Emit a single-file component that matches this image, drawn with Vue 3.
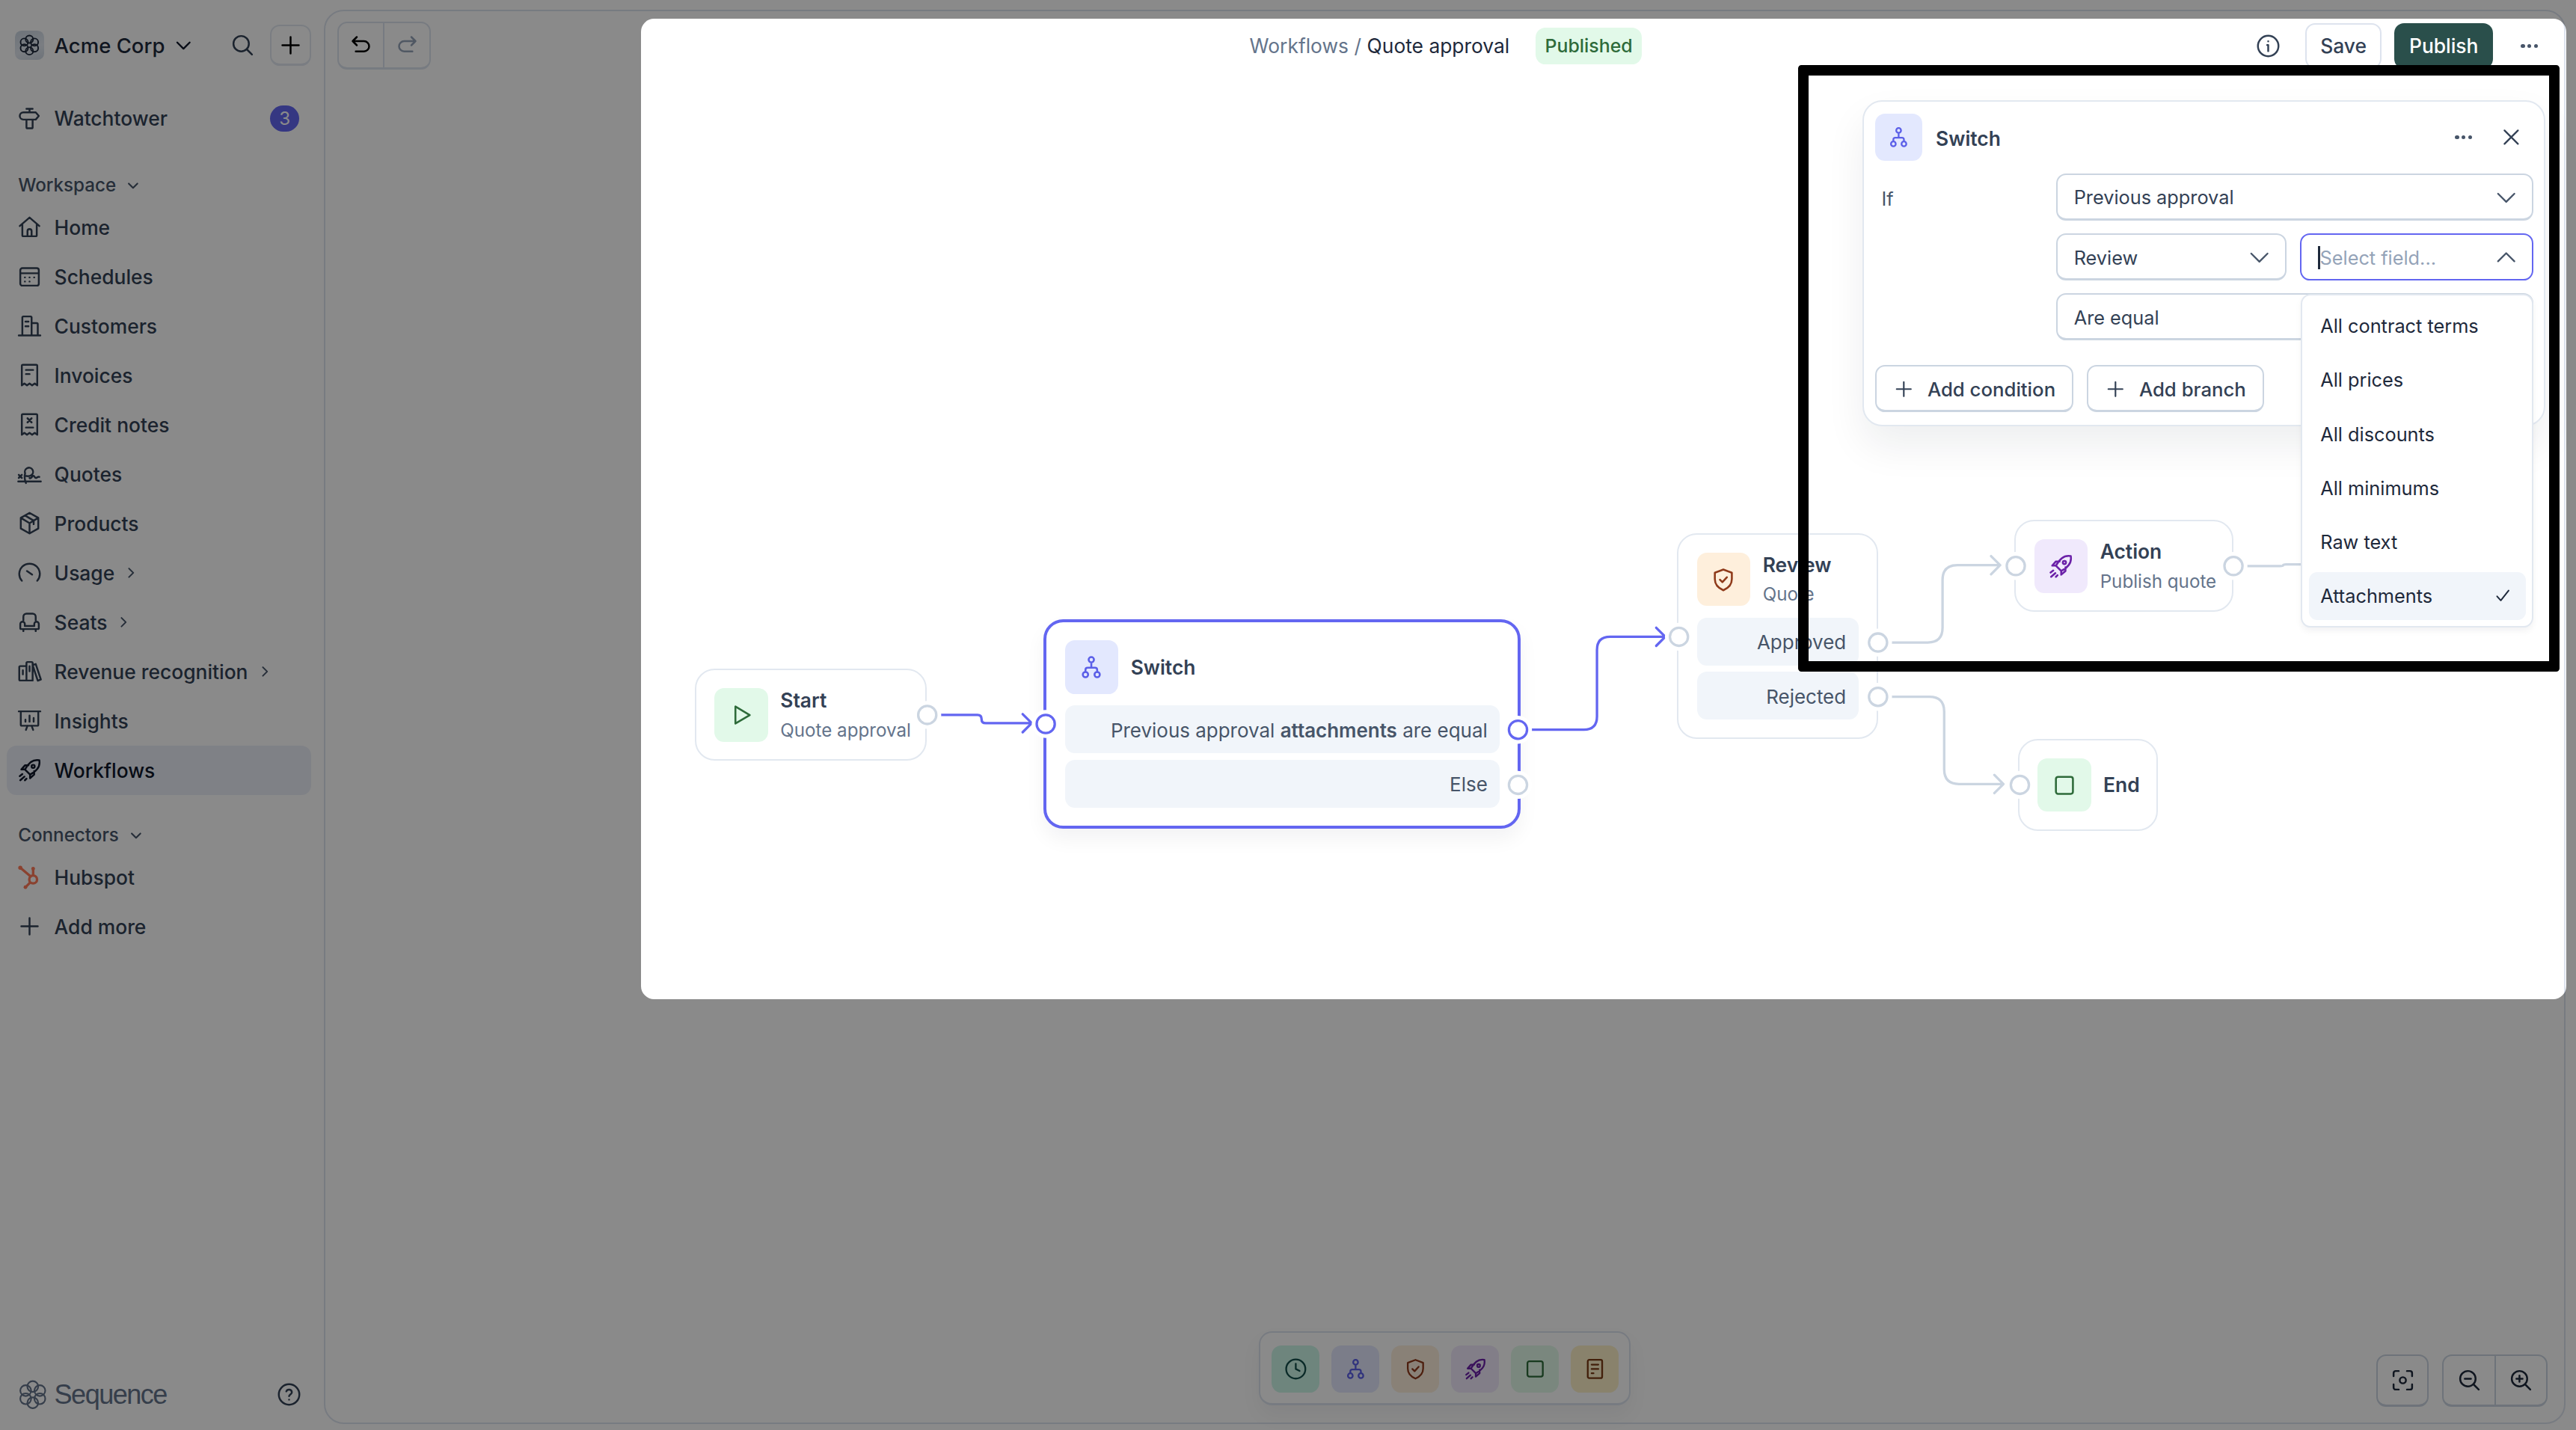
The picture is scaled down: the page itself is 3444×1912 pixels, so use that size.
<script setup>
const icons = {
  tower: 'M12 2.5v3.5M9 2.5h6M6 6h12l3 3.5-3 3.5H6a3.5 3.5 0 0 1 0-7zM9 13v7.5a1 1 0 0 0 1 1h4a1 1 0 0 0 1-1V13',
  home: 'M2.5 11 12 2.8l9.5 8.2M5 8.8V20a1 1 0 0 0 1 1h12a1 1 0 0 0 1-1V8.8M10 21v-5a2 2 0 0 1 4 0v5',
  calendar: 'M5 4h14a2 2 0 0 1 2 2v13a2 2 0 0 1-2 2H5a2 2 0 0 1-2-2V6a2 2 0 0 1 2-2zM3 9h18M7.5 13h.01M12 13h.01M16.5 13h.01M7.5 17h.01M12 17h.01',
  building: 'M1.5 21.5h21M5 21.5V4a1 1 0 0 1 1-1h7a1 1 0 0 1 1 1v17.5M14 9.5h5a1 1 0 0 1 1 1v11M8 8h3M8 12.5h3',
  receipt: 'M4.5 22V3a1 1 0 0 1 1-1h13a1 1 0 0 1 1 1v19l-2.5-1.8-2.5 1.8-2.5-1.8L9.5 22 7 20.2zM8.5 7h7M8.5 11h3.5',
  creditNote: 'M4.5 22V3a1 1 0 0 1 1-1h13a1 1 0 0 1 1 1v19l-2.5-1.8-2.5 1.8-2.5-1.8L9.5 22 7 20.2zM10 6l4 4M14 6l-4 4M8.5 15h7',
  signature: 'M1 19.5h22M1.5 13l3 3M4.5 13l-3 3M8.5 21c-1.2-3-1.8-6-.8-9.5a4 4 0 1 1 5.8 2c-1.6 1-3.5 1-5.5.5M12 16c1.5 1.5 2.5-2.5 4-2 1 .3 1 2.5 2.5 2s1.5-1.5 3-1',
  box: 'M12 2 20.5 6.8v10.4L12 22l-8.5-4.8V6.8zM3.5 6.8 12 12l8.5-5.2M12 12v10M7.5 4.5l8.5 5v3.5',
  gauge: 'M4.5 20a10 10 0 1 1 15 0M9.5 10.5l5 3.5',
  seat: 'M6 10.5V7a3 3 0 0 1 3-3h6a3 3 0 0 1 3 3v3.5M3 14a2.2 2.2 0 0 1 4.4 0v2h9.2v-2a2.2 2.2 0 0 1 4.4 0v4a1 1 0 0 1-1 1H4a1 1 0 0 1-1-1zM6 19v2M18 19v2',
  books: 'M3 7h5a1 1 0 0 1 1 1v13H3a1 1 0 0 1-1-1V8a1 1 0 0 1 1-1zM9 4a1 1 0 0 1 1-1h4a1 1 0 0 1 1 1v17H9zM15 6l3-1 5 15-3 1.2zM5.5 11v4M12 7v5',
  insights: 'M1.5 3h21M3.5 3v13a1 1 0 0 0 1 1h15a1 1 0 0 0 1-1V3M8 13v-2M12 13V7M16 13V9.5M10 17l-1.5 4M14 17l1.5 4',
  rocket: 'M13 4.5C15.5 2.5 18.5 2 21.5 2.5c.5 3 0 6-2 8.5-1.7 2.3-4 4-7 5.5l-5-5c1.5-2.8 3.2-5.2 5.5-7zM7.5 11.5H4l3.5-4H11M12.5 16.5V20l4-3.5V13M15.5 10a1.5 1.5 0 1 0 0-3 1.5 1.5 0 0 0 0 3zM5 16l-2.5 2M7 18.5 3 22M9 20.5l-1.5 1.5',
  plus: 'M12 4v16M4 12h16',
  chevronDown: 'M5 9l7 7 7-7',
  chevronUp: 'M5 15l7-7 7 7',
  chevronRight: 'M9 5l7 7-7 7',
  search: 'M10.5 18a7.5 7.5 0 1 0 0-15 7.5 7.5 0 0 0 0 15zM21 21l-5-5',
  undo: 'M8 4 4 8l4 4M4 8h11a5 5 0 0 1 0 10H7',
  redo: 'M16 4l4 4-4 4M20 8H9a5 5 0 0 0 0 10h8',
  info: 'M12 22a10 10 0 1 0 0-20 10 10 0 0 0 0 20zM12 11v6M11 11h1M12 7.5h.01',
  help: 'M12 22a10 10 0 1 0 0-20 10 10 0 0 0 0 20zM9.3 9a2.8 2.8 0 0 1 5.4.9c0 1.900-2.700 2.300-2.700 3.800M12 17h.01',
  close: 'M5 5l14 14M19 5 5 19',
  check: 'M5 13l4.5 5L19 6',
  play: 'M6.5 4v16l13.5-8z',
  stop: 'M6 4h12a2 2 0 0 1 2 2v12a2 2 0 0 1-2 2H6a2 2 0 0 1-2-2V6a2 2 0 0 1 2-2z',
  shield: 'M12 2.5l8 3v6c0 4.8-3.3 8.5-8 10.5-4.700-2-8-5.700-8-10.500v-6zM8.800 12l2.300 2.300 4.200-4.600',
  switch: 'M12 7.500a2.500 2.500 0 1 0 0-5 2.500 2.500 0 0 0 0 5zM12 7.500v5M6.500 16.500V14.500a2 2 0 0 1 2-2h7a2 2 0 0 1 2 2v2M6.500 21.500a2.500 2.500 0 1 0 0-5 2.500 2.500 0 0 0 0 5zM17.500 21.500a2.500 2.500 0 1 0 0-5 2.500 2.500 0 0 0 0 5z',
  clock: 'M12 22a10 10 0 1 0 0-20 10 10 0 0 0 0 20zM12 6.500V12l4 2',
  doc: 'M6 2.500h12a1.500 1.500 0 0 1 1.500 1.500v16a1.500 1.500 0 0 1-1.500 1.500H6A1.500 1.500 0 0 1 4.500 20V4A1.500 1.500 0 0 1 6 2.500zM8.500 7.500h7M8.500 12h7M8.500 16.500h2',
  fit: 'M3 8V5a2 2 0 0 1 2-2h3M16 3h3a2 2 0 0 1 2 2v3M21 16v3a2 2 0 0 1-2 2h-3M8 21H5a2 2 0 0 1-2-2v-3M12 15a3 3 0 1 0 0-6 3 3 0 0 0 0 6z',
  zoomOut: 'M10.500 18a7.500 7.500 0 1 0 0-15 7.500 7.500 0 0 0 0 15zM21 21l-5-5M7.500 10.500h6',
  zoomIn: 'M10.500 18a7.500 7.500 0 1 0 0-15 7.500 7.500 0 0 0 0 15zM21 21l-5-5M7.500 10.500h6M10.500 7.500v6',
}

const petals = [0, 60, 120, 180, 240, 300].map((deg) => ({
  cx: 12 + 6.6 * Math.sin((deg * Math.PI) / 180),
  cy: 12 - 6.6 * Math.cos((deg * Math.PI) / 180),
}))

const navItems = [
  { label: 'Home', icon: 'home' },
  { label: 'Schedules', icon: 'calendar' },
  { label: 'Customers', icon: 'building' },
  { label: 'Invoices', icon: 'receipt' },
  { label: 'Credit notes', icon: 'creditNote' },
  { label: 'Quotes', icon: 'signature' },
  { label: 'Products', icon: 'box' },
  { label: 'Usage', icon: 'gauge', more: true },
  { label: 'Seats', icon: 'seat', more: true },
  { label: 'Revenue recognition', icon: 'books', more: true },
  { label: 'Insights', icon: 'insights' },
  { label: 'Workflows', icon: 'rocket', active: true },
]

const palette = [
  { icon: 'clock', tone: 'teal' },
  { icon: 'switch', tone: 'indigo' },
  { icon: 'shield', tone: 'orange' },
  { icon: 'rocket', tone: 'purple' },
  { icon: 'stop', tone: 'green' },
  { icon: 'doc', tone: 'yellow' },
]

const nodes = [
  { id: 'start', x: 422.3, y: 406.5, w: 141, h: 56, title: 'Start', sub: 'Quote approval', icon: 'play', tone: 'green' },
  {
    id: 'switch', x: 634.3, y: 376.5, w: 290, h: 127, title: 'Switch', icon: 'switch', tone: 'indigo', selected: true,
    rows: [{ text: 'Previous approval', bold: 'attachments', tail: 'are equal' }, { text: 'Else' }],
  },
  {
    id: 'review', x: 1019.3, y: 324, w: 122, h: 125, title: 'Review', sub: 'Quote', icon: 'shield', tone: 'orange',
    rows: [{ text: 'Approved' }, { text: 'Rejected' }],
  },
  { id: 'action', x: 1224.3, y: 316, w: 133, h: 56, title: 'Action', sub: 'Publish quote', icon: 'rocket', tone: 'purple' },
  { id: 'end', x: 1226.3, y: 449, w: 85, h: 56, title: 'End', icon: 'stop', tone: 'green' },
]

const edges = [
  { d: 'M570 434.5H594q2.5 0 2.5 2.5t2.5 2.5H627M621.5 434l5.5 5.5-5.5 5.5', active: true },
  { d: 'M929.5 443.5H962.5q8 0 8-8V395q0-8 8-8H1012M1006.5 381.5l5.5 5.5-5.5 5.5', active: true },
  { d: 'M1149.5 390.5H1171.5q9 0 9-9V352.5q0-9 9-9H1215.5M1210 338l5.5 5.5-5.5 5.5' },
  { d: 'M1149.5 423.5H1172.5q9 0 9 9V467.5q0 9 9 9H1217.5M1212 471l5.5 5.5-5.5 5.5' },
  { d: 'M1364.5 344H1385.5q2 0 2-.5t2-.5H1410' },
]

const ports = [
  { x: 563.5, y: 434.5 },
  { x: 635.5, y: 440, active: true },
  { x: 922.5, y: 443.5, active: true },
  { x: 922.5, y: 477 },
  { x: 1020.3, y: 387 },
  { x: 1141.3, y: 390.5 },
  { x: 1141.3, y: 423.5 },
  { x: 1225, y: 344 },
  { x: 1357.3, y: 344 },
  { x: 1227.5, y: 477 },
]

const fields = ['All contract terms', 'All prices', 'All discounts', 'All minimums', 'Raw text', 'Attachments']
</script>

<template>
  <div class="app">
    <aside class="sidebar">
      <div class="org">
        <span class="org-logo">
          <svg class="logo-mark" viewBox="0 0 24 24"><circle v-for="(p, i) in petals" :key="i" :cx="p.cx" :cy="p.cy" r="4.2" /></svg>
        </span>
        <span class="org-name">Acme Corp</span>
        <svg class="icon org-chevron" viewBox="0 0 24 24"><path :d="icons.chevronDown" /></svg>
        <svg class="icon org-search" viewBox="0 0 24 24"><path :d="icons.search" /></svg>
        <button class="org-add"><svg class="icon" viewBox="0 0 24 24"><path :d="icons.plus" /></svg></button>
      </div>

      <div class="nav-row">
        <svg class="icon" viewBox="0 0 24 24"><path :d="icons.tower" /></svg>
        <span>Watchtower</span>
        <span class="count">3</span>
      </div>

      <div class="section">Workspace <svg class="icon mini" viewBox="0 0 24 24"><path :d="icons.chevronDown" /></svg></div>
      <div v-for="item in navItems" :key="item.label" class="nav-row" :class="{ active: item.active }">
        <svg class="icon" viewBox="0 0 24 24"><path :d="icons[item.icon]" /></svg>
        <span>{{ item.label }}</span>
        <svg v-if="item.more" class="icon mini more" viewBox="0 0 24 24"><path :d="icons.chevronRight" /></svg>
      </div>

      <div class="section second">Connectors <svg class="icon mini" viewBox="0 0 24 24"><path :d="icons.chevronDown" /></svg></div>
      <div class="nav-row">
        <svg class="icon hubspot" viewBox="0 0 24 24">
          <circle cx="15.5" cy="14.5" r="3.8" />
          <path d="M15.5 10.5V5M3.5 3.500l9.500 8M12.500 17.500 8.500 21.500" />
          <circle class="dot" cx="15.5" cy="4" r="1.8" />
          <circle class="dot" cx="3" cy="3" r="2" />
          <circle class="dot" cx="8" cy="22" r="1.8" />
        </svg>
        <span>Hubspot</span>
      </div>
      <div class="nav-row">
        <svg class="icon" viewBox="0 0 24 24"><path :d="icons.plus" /></svg>
        <span>Add more</span>
      </div>

      <div class="brand">
        <svg class="brand-mark" viewBox="0 0 24 24"><circle v-for="(p, i) in petals" :key="i" :cx="p.cx" :cy="p.cy" r="4.4" /></svg>
        <span class="brand-name">Sequence</span>
        <svg class="icon brand-help" viewBox="0 0 24 24"><path :d="icons.help" /></svg>
      </div>
    </aside>

    <main class="panel">
      <header class="toolbar">
        <div class="history">
          <button><svg class="icon" viewBox="0 0 24 24"><path :d="icons.undo" /></svg></button>
          <button class="off"><svg class="icon" viewBox="0 0 24 24"><path :d="icons.redo" /></svg></button>
        </div>
        <div class="crumbs">
          <span class="crumb-muted">Workflows /</span>
          <span class="crumb-current">Quote approval</span>
          <span class="published">Published</span>
        </div>
        <div class="actions">
          <svg class="icon info" viewBox="0 0 24 24"><path :d="icons.info" /></svg>
          <button class="btn-save">Save</button>
          <button class="btn-publish">Publish</button>
          <span class="dots"><i></i><i></i><i></i></span>
        </div>
      </header>

      <div class="bottom-bar">
        <div class="palette">
          <span v-for="p in palette" :key="p.tone" class="tile" :class="p.tone">
            <svg class="icon" viewBox="0 0 24 24"><path :d="icons[p.icon]" /></svg>
          </span>
        </div>
        <div class="zoom-tools">
          <button class="zoom-btn"><svg class="icon" viewBox="0 0 24 24"><path :d="icons.fit" /></svg></button>
          <div class="zoom-group">
            <button class="zoom-btn"><svg class="icon" viewBox="0 0 24 24"><path :d="icons.zoomOut" /></svg></button>
            <button class="zoom-btn"><svg class="icon" viewBox="0 0 24 24"><path :d="icons.zoomIn" /></svg></button>
          </div>
        </div>
      </div>
    </main>

    <div class="canvas">
      <div
        v-for="n in nodes"
        :key="n.id"
        class="node"
        :class="{ selected: n.selected }"
        :style="{ left: `${n.x}px`, top: `${n.y}px`, width: `${n.w}px`, height: `${n.h}px` }"
      >
        <div class="node-head">
          <span class="tile" :class="n.tone"><svg class="icon" viewBox="0 0 24 24"><path :d="icons[n.icon]" /></svg></span>
          <div class="node-text">
            <div class="node-title">{{ n.title }}</div>
            <div v-if="n.sub" class="node-sub">{{ n.sub }}</div>
          </div>
        </div>
        <div v-for="r in n.rows" :key="r.text" class="node-row">
          <span>{{ r.text }} <b v-if="r.bold">{{ r.bold }}</b> {{ r.tail }}</span>
        </div>
      </div>

      <svg class="wires" viewBox="0 0 1565.45 869">
        <path v-for="(e, i) in edges" :key="i" class="wire" :class="{ on: e.active }" :d="e.d" />
        <g v-for="(p, i) in ports" :key="i">
          <circle class="halo" :cx="p.x" :cy="p.y" r="8.5" />
          <circle class="port" :class="{ on: p.active }" :cx="p.x" :cy="p.y" r="5.5" />
        </g>
      </svg>

      <section class="config">
        <div class="config-head">
          <span class="tile indigo"><svg class="icon" viewBox="0 0 24 24"><path :d="icons.switch" /></svg></span>
          <span class="config-title">Switch</span>
          <span class="dots"><i></i><i></i><i></i></span>
          <svg class="icon config-close" viewBox="0 0 24 24"><path :d="icons.close" /></svg>
        </div>
        <div class="config-form">
          <label class="if-label">If</label>
          <div class="select wide"><span>Previous approval</span><svg class="icon" viewBox="0 0 24 24"><path :d="icons.chevronDown" /></svg></div>
          <div class="select start"><span>Review</span><svg class="icon" viewBox="0 0 24 24"><path :d="icons.chevronDown" /></svg></div>
          <div class="select focused"><i class="caret"></i><span class="placeholder">Select field...</span><svg class="icon" viewBox="0 0 24 24"><path :d="icons.chevronUp" /></svg></div>
          <div class="select wide"><span>Are equal</span></div>
        </div>
        <div class="config-actions">
          <button class="btn-add"><svg class="icon" viewBox="0 0 24 24"><path :d="icons.plus" /></svg>Add condition</button>
          <button class="btn-add"><svg class="icon" viewBox="0 0 24 24"><path :d="icons.plus" /></svg>Add branch</button>
        </div>
      </section>

      <ul class="menu">
        <li v-for="f in fields" :key="f" :class="{ picked: f === 'Attachments' }">
          {{ f }}
          <svg v-if="f === 'Attachments'" class="icon" viewBox="0 0 24 24"><path :d="icons.check" /></svg>
        </li>
      </ul>
    </div>

    <div class="spotlight"></div>
    <div class="frame"></div>
  </div>
</template>

<style scoped>
.app {
  zoom: 2.2;
  position: relative;
  display: flex;
  width: 1565.45px;
  height: 869px;
  overflow: hidden;
  background: #fff;
  color: #334155;
  font-family: Inter, "Noto Sans", sans-serif;
  font-size: 12px;
}

button {
  font-family: inherit;
  padding: 0;
  background: #fff;
  cursor: pointer;
}

.icon {
  display: block;
  flex: none;
  width: 15px;
  height: 15px;
  fill: none;
  stroke: currentColor;
  stroke-width: 1.8;
  stroke-linecap: round;
  stroke-linejoin: round;
}

.icon.mini {
  width: 9px;
  height: 9px;
  stroke-width: 2.6;
}

.sidebar {
  display: flex;
  flex: none;
  flex-direction: column;
  width: 197px;
  height: 100%;
}

.org {
  display: flex;
  align-items: center;
  height: 57px;
  padding: 0 8px 2px 9px;
  box-sizing: border-box;
}

.org-logo {
  display: flex;
  align-items: center;
  justify-content: center;
  width: 18px;
  height: 18px;
  margin-right: 6px;
  border-radius: 4px;
  background: linear-gradient(160deg, #cbd5e1, #e2e8f0 60%, #cbd5e1);
}

.logo-mark {
  width: 13px;
  height: 13px;
  fill: none;
  stroke: #1e293b;
  stroke-width: 1.6;
}

.org-name {
  font-size: 12.5px;
  font-weight: 500;
  color: #1e293b;
}

.org-chevron {
  width: 13px;
  height: 13px;
  margin-left: 5px;
  color: #0f172a;
  stroke-width: 2;
}

.org-search {
  margin-left: auto;
  margin-right: 9px;
}

.org-add {
  display: flex;
  align-items: center;
  justify-content: center;
  width: 25px;
  height: 25px;
  border: 1px solid #e2e8f0;
  border-bottom-width: 1.5px;
  border-radius: 6px;
}

.nav-row {
  display: flex;
  flex: none;
  align-items: center;
  gap: 7.5px;
  width: 185px;
  height: 30px;
  margin-left: 4px;
  padding-left: 6.5px;
  box-sizing: border-box;
  border-radius: 6px;
  font-size: 12px;
  font-weight: 500;
}

.nav-row .mini {
  stroke-width: 2.4;
  color: #475569;
}

.nav-row .more {
  margin-left: -2px;
}

.nav-row.active {
  background: #ebeff7;
  color: #0f172a;
}

.count {
  display: flex;
  align-items: center;
  justify-content: center;
  width: 18px;
  height: 16px;
  margin-left: auto;
  margin-right: 7px;
  border-radius: 8px;
  background: #6366f1;
  color: #fff;
  font-size: 11px;
  font-weight: 400;
}

.section {
  display: flex;
  flex: none;
  align-items: center;
  gap: 6px;
  height: 21px;
  margin-top: 15px;
  padding-left: 11px;
  color: #475569;
  font-size: 11px;
  font-weight: 500;
}

.section.second {
  margin-top: 14px;
}

.hubspot {
  color: #ff7a59;
}

.hubspot.icon {
  stroke-width: 2.4;
}

.hubspot .dot {
  fill: #ff7a59;
  stroke: none;
}

.brand {
  display: flex;
  align-items: center;
  height: 24px;
  margin-top: auto;
  margin-bottom: 9.5px;
  padding-left: 11px;
  color: #64748b;
}

.brand-mark {
  width: 18px;
  height: 18px;
  margin-right: 4px;
  fill: none;
  stroke: currentColor;
  stroke-width: 1.3;
}

.brand-name {
  font-family: "Liberation Sans", Arial, sans-serif;
  font-size: 16.4px;
  letter-spacing: -0.7px;
}

.brand-help {
  margin-left: auto;
  margin-right: 14px;
  color: #334155;
}

.panel {
  position: relative;
  flex: 1;
  min-width: 0;
  margin: 6px 6.45px 3.5px 0;
  border: 1px solid #dde3ee;
  border-radius: 12px;
}

.toolbar {
  display: grid;
  grid-template-columns: 1fr auto 1fr;
  align-items: center;
  height: 42px;
  padding: 0 13px 0 7px;
}

.history {
  display: flex;
  width: 57px;
  height: 29px;
  border: 1px solid #dde3ee;
  border-bottom-width: 1.5px;
  border-radius: 6px;
  box-sizing: border-box;
}

.history button {
  flex: 1;
  display: flex;
  align-items: center;
  justify-content: center;
  border: 0;
  background: none;
}

.history button + button {
  border-left: 1px solid #dde3ee;
}

.history .off {
  color: #94a3b8;
}

.crumbs {
  display: flex;
  align-items: center;
  gap: 3.5px;
  margin-left: 7px;
  font-size: 12px;
}

.crumb-muted {
  color: #64748b;
}

.crumb-current {
  color: #1e293b;
}

.published {
  margin-left: 12.5px;
  padding: 0 5.5px;
  height: 22px;
  line-height: 22px;
  border-radius: 6px;
  background: #e2f9e9;
  color: #2e6b3a;
  font-size: 11.3px;
  font-weight: 500;
}

.actions {
  display: flex;
  align-items: center;
  justify-content: flex-end;
}

.info {
  margin-right: 15px;
}

.btn-save,
.btn-publish {
  height: 28px;
  border-radius: 6px;
  font-size: 12px;
  font-weight: 500;
}

.btn-save {
  width: 46px;
  margin-right: 8px;
  border: 1px solid #dde3ee;
  color: #334155;
}

.btn-publish {
  width: 60px;
  margin-right: 14px;
  border: 0;
  background: #2a4f4b;
  color: #fff;
}

.dots {
  display: flex;
  gap: 1.5px;
  width: 16px;
  justify-content: center;
}

.dots i {
  width: 2.5px;
  height: 2.5px;
  border-radius: 50%;
  background: #475569;
}

.bottom-bar {
  position: absolute;
  left: 0;
  right: 0;
  bottom: 10.5px;
  height: 45px;
}

.palette {
  position: absolute;
  left: 567px;
  bottom: 0;
  display: flex;
  gap: 7.4px;
  width: 226px;
  height: 45px;
  padding: 7.5px 7px;
  box-sizing: border-box;
  border: 1px solid #dde3ee;
  border-bottom-width: 1.5px;
  border-radius: 8px;
  box-shadow: 0 6px 12px rgba(15, 23, 42, 0.05);
}

.zoom-tools {
  position: absolute;
  right: 10px;
  bottom: -1px;
  display: flex;
  gap: 8px;
}

.zoom-group {
  display: flex;
}

.zoom-btn {
  display: flex;
  align-items: center;
  justify-content: center;
  width: 32px;
  height: 32px;
  border: 1px solid #cbd5e1;
  border-bottom-width: 1.5px;
  border-radius: 6px;
  background: none;
  color: #1e293b;
}

.zoom-group .zoom-btn:first-child {
  border-right: 0;
  border-radius: 6px 0 0 6px;
}

.zoom-group .zoom-btn:last-child {
  border-radius: 0 6px 6px 0;
}

.tile {
  display: flex;
  flex: none;
  align-items: center;
  justify-content: center;
  width: 29px;
  height: 29px;
  border-radius: 6px;
}

.tile .icon {
  width: 14px;
  height: 14px;
  stroke-width: 1.8;
}

.tile.green { background: #e2f9e9; color: #2e6b3a; }
.tile.indigo { background: #e3e8fe; color: #5b5fe8; }
.tile.orange { background: #feefdc; color: #8f3a1a; }
.tile.purple { background: #f0e9fc; color: #6b21a8; }
.tile.teal { background: #ccf5e8; color: #134e4a; }
.tile.yellow { background: #fdf0c8; color: #7a3a14; }

.canvas {
  position: absolute;
  inset: 0;
  pointer-events: none;
}

.node {
  position: absolute;
  padding: 11px;
  box-sizing: border-box;
  border: 1px solid #e2e8f0;
  border-radius: 12px;
  background: #fff;
}

.node.selected {
  padding: 11px 11px;
  border: 2px solid #6366f1;
  box-shadow: 0 6px 12px rgba(15, 23, 42, 0.05);
}

.node-head {
  display: flex;
  align-items: center;
  gap: 7.5px;
  height: 32.5px;
  margin-bottom: 7px;
}

.node .tile {
  width: 32.5px;
  height: 32.5px;
}

.node .tile .icon {
  width: 15.5px;
  height: 15.5px;
}

.node-text {
  padding-top: 0.5px;
}

.node-title {
  font-size: 12px;
  font-weight: 600;
  line-height: 18px;
}

.node-sub {
  color: #64748b;
  font-size: 11px;
  line-height: 18px;
  white-space: nowrap;
}

.node-row {
  display: flex;
  align-items: center;
  justify-content: flex-end;
  height: 29px;
  margin-bottom: 4px;
  padding: 1px 7.5px 0 0;
  box-sizing: border-box;
  border-radius: 6px;
  background: #f1f5fa;
  color: #475569;
  font-size: 11.8px;
  white-space: nowrap;
}

.node-row b {
  font-weight: 600;
}

.wires {
  position: absolute;
  left: 0;
  top: 0;
  width: 1565.45px;
  height: 869px;
}

.wire {
  fill: none;
  stroke: #cbd5e1;
  stroke-width: 1.5;
  stroke-linecap: round;
  stroke-linejoin: round;
}

.wire.on {
  stroke: #6366f1;
}

.halo {
  fill: #fff;
}

.port {
  fill: #fff;
  stroke: #cbd5e1;
  stroke-width: 1.5;
}

.port.on {
  stroke: #6366f1;
}

.config {
  position: absolute;
  left: 1132px;
  top: 61px;
  width: 415px;
  height: 198px;
  padding: 7px 6.5px;
  box-sizing: border-box;
  border: 1px solid #e2e8f0;
  border-radius: 12px;
  background: #fff;
  box-shadow: 0 12px 24px rgba(15, 23, 42, 0.07);
}

.config-head {
  display: flex;
  align-items: center;
  height: 29px;
  margin-bottom: 7.5px;
}

.config-title {
  margin-left: 8px;
  padding-top: 1px;
  font-size: 12px;
  font-weight: 600;
}

.config-head .dots {
  margin-left: auto;
  margin-right: 13.8px;
}

.config-close {
  width: 14px;
  height: 14px;
  margin-right: 6.7px;
}

.config-form {
  display: grid;
  grid-template-columns: 101.5px 140px 1fr;
  column-gap: 8.5px;
  row-gap: 8px;
}

.if-label {
  padding: 6.5px 0 0 4px;
  color: #475569;
  font-size: 11.5px;
  line-height: 18px;
}

.select {
  display: flex;
  align-items: center;
  height: 28.5px;
  padding: 1px 7px 0 10px;
  box-sizing: border-box;
  border: 1px solid #cbd5e1;
  border-bottom-width: 1.5px;
  border-radius: 6px;
  font-size: 11.5px;
}

.select .icon {
  margin-left: auto;
  width: 17px;
  height: 17px;
  color: #475569;
  stroke-width: 1.5;
}

.select.wide {
  grid-column: 2 / 4;
}

.select.start {
  grid-column: 2;
}

.select.focused {
  border: 1px solid #6366f1;
}

.caret {
  width: 1px;
  height: 14px;
  background: #1e293b;
}

.placeholder {
  color: #94a3b8;
}

.config-actions {
  display: flex;
  gap: 8px;
  margin-top: 15px;
}

.btn-add {
  display: flex;
  align-items: center;
  height: 28.5px;
  padding: 1px 10px 0 10px;
  gap: 8px;
  border: 1px solid #cbd5e1;
  border-bottom-width: 1.5px;
  border-radius: 6px;
  color: #334155;
  font-size: 11.7px;
  font-weight: 500;
}

.btn-add .icon {
  width: 13px;
  height: 13px;
}

.menu {
  position: absolute;
  left: 1398.2px;
  top: 178.7px;
  width: 141.5px;
  margin: 0;
  padding: 4px;
  box-sizing: border-box;
  list-style: none;
  border: 1px solid #e2e8f0;
  border-radius: 6px;
  background: #fff;
  box-shadow: 0 2px 4px rgba(15, 23, 42, 0.05);
}

.menu li {
  display: flex;
  align-items: center;
  justify-content: space-between;
  height: 29px;
  padding: 0 8px 0 7px;
  border-radius: 5px;
  color: #1e293b;
  font-size: 11.5px;
}

.menu li + li {
  margin-top: 3.8px;
}

.menu .picked {
  background: #f1f5fa;
}

.menu .icon {
  width: 12px;
  height: 12px;
  stroke-width: 1.8;
}

.spotlight {
  position: absolute;
  left: 389.5px;
  top: 11.5px;
  width: 1170px;
  height: 596px;
  border-radius: 8px;
  box-shadow: 0 0 0 3000px rgba(0, 0, 0, 0.46);
}

.frame {
  position: absolute;
  left: 1092.6px;
  top: 39.6px;
  width: 463px;
  height: 368.6px;
  box-sizing: border-box;
  border: 6.4px solid #000;
  border-radius: 2px;
}
</style>

<style>
body {
  margin: 0;
  overflow: hidden;
}
</style>
